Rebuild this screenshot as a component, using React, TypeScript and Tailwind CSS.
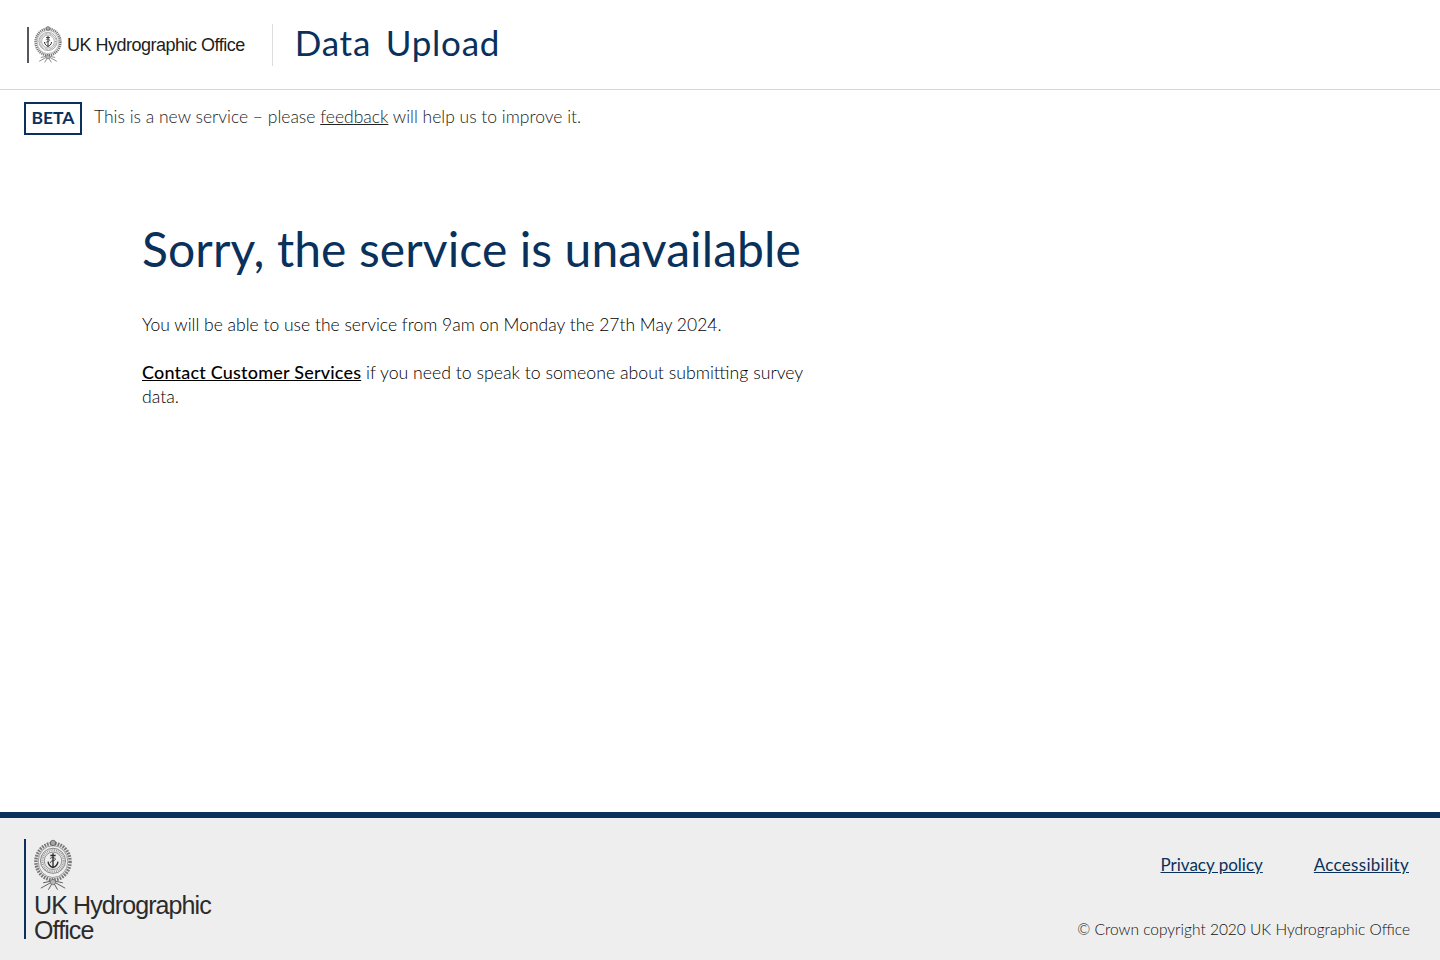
import React from 'react';

const body = 'font-["Lato",sans-serif]';

function Crest({ className }: { className: string }) {
  return (
    <svg viewBox="0 0 50 67" className={className} fill="none" stroke="#444">
      {/* outer rope and wreath */}
      <ellipse cx="25" cy="29" rx="22.5" ry="24" strokeWidth="4.5" strokeDasharray="2.2 1.4" stroke="#777" />
      <ellipse cx="25" cy="29" rx="19.5" ry="21" strokeWidth="0.7" stroke="#555" />
      <circle cx="25" cy="28" r="16.5" strokeWidth="0.8" />
      <circle cx="25" cy="28" r="14" strokeWidth="3" strokeDasharray="1.1 1.3" stroke="#999" />
      <circle cx="25" cy="28" r="11.5" strokeWidth="0.7" />
      {/* top crown */}
      <circle cx="25" cy="4.5" r="3.6" fill="#a5a5a5" strokeWidth="0.8" />
      {/* anchor */}
      <path d="M25 18v19M21.5 21h7M18.5 29c.5 5 4 7 6.5 8 2.5-1 6-3 6.500-8" strokeWidth="1.8" stroke="#2e2e2e" />
      <path d="M21 25c2-2 6-1 7 0s-1 3-3 3-4 1-3 3" strokeWidth="1.1" stroke="#2e2e2e" />
      {/* ribbon at the foot */}
      <circle cx="25" cy="56" r="3.600" fill="#b5b5b5" strokeWidth="0.7" />
      <path d="M21.500 57L9 64M28.500 57l12.500 7M21 55l-9 2M29 55l9 2M23 59l-4 7M27 59l4 7" strokeWidth="1.1" />
    </svg>
  );
}

export default function App() {
  return (
    <div className={`flex min-h-[960px] flex-col bg-white ${body}`}>
      <header className="flex h-[90px] items-center border-b border-[#d6d6d6] pl-[27px]">
        <div className="flex h-[36px] items-center border-l-2 border-[#55585c] pl-[5px]">
          <Crest className="h-[37px] w-[28px]" />
          <span className='mt-[2px] ml-[5px] font-["Liberation_Sans",sans-serif] text-[18px] tracking-[-0.5px] text-[#1d1d1b]'>
            UK Hydrographic Office
          </span>
        </div>
        <div className="ml-[27px] flex h-[42px] items-center border-l border-[#dcdcdc] pl-[22px]">
          <h2 className="-mt-[4px] text-[35px] font-normal tracking-[0.75px] text-[#09315b] [word-spacing:5px]">
            Data Upload
          </h2>
        </div>
      </header>

      <div className="flex items-start px-6 pt-3">
        <span className="flex h-[33px] w-[58px] items-center justify-center border-2 border-[#09315b] text-[17.5px] font-bold text-[#09315b]">
          BETA
        </span>
        <p className="ml-3 text-[17.5px] leading-[30px] font-light text-[#222]">
          This is a new service – please <a className="underline">feedback</a> will help us to improve it.
        </p>
      </div>

      <main className="flex-1 pt-[84px] pl-[142px]">
        <h1 className="text-[48px] leading-[60px] font-normal tracking-[0.1px] text-[#09315b]">
          Sorry, the service is unavailable
        </h1>
        <div className="mt-[34px] w-[670px] leading-[24px] font-light text-black">
          <p className="text-[17.5px]">You will be able to use the service from 9am on Monday the 27th May 2024.</p>
          <p className="mt-[23px] text-[17.7px]">
            <a className="text-[18px] font-medium tracking-[0.2px] text-black underline">Contact Customer Services</a> if
            you need to speak to someone about submitting survey data.
          </p>
        </div>
      </main>

      <footer className="flex h-[148px] justify-between border-t-[6px] border-[#09315b] bg-[#eeeeee] pr-[30px] pl-6">
        <div className="mt-[21px] h-[100px] border-l-2 border-[#09315b] pl-[8px]">
          <Crest className="h-[52px] w-[38px]" />
          <p className='mt-[2px] font-["Liberation_Sans",sans-serif] text-[25px] leading-[25px] tracking-[-0.9px] text-[#2b2b2b]'>
            UK Hydrographic
            <br />
            Office
          </p>
        </div>
        <div className="flex flex-col items-end pt-[35px]">
          <nav className="flex gap-[51px] pr-px text-[17px] leading-[24px] text-[#09315b]">
            <a className="underline">Privacy policy</a>
            <a className="tracking-[0.28px] underline">Accessibility</a>
          </nav>
          <p className="mt-[40px] text-[15.5px] leading-[24px] font-light text-[#111]">
            © Crown copyright 2020 UK Hydrographic Office
          </p>
        </div>
      </footer>
    </div>
  );
}
